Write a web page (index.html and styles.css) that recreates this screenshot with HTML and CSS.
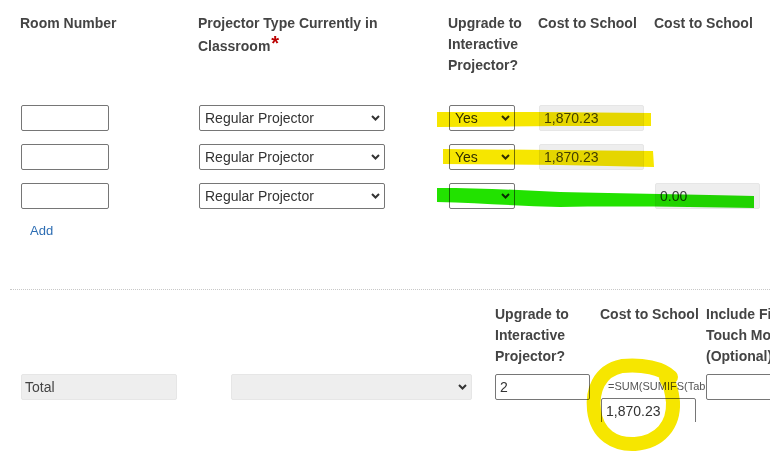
FILE: index.html
```html
<!DOCTYPE html>
<html lang="en">
<head>
    <meta charset="UTF-8">
    <meta name="viewport" content="width=device-width, initial-scale=1.0">
    <title>Interactive Projector Upgrade</title>
    <link rel="stylesheet" href="styles.css">
</head>
<body>

<div class="page">

    <section class="projectors">
        <div class="row head">
            <div class="cell">Room Number</div>
            <div class="cell">Projector Type Currently in Classroom<span class="req">*</span></div>
            <div class="cell">Upgrade to Interactive Projector?</div>
            <div class="cell">Cost to School</div>
            <div class="cell">Cost to School</div>
        </div>

        <div class="rows">
            <div class="row">
                <div class="cell"><input class="field room" type="text"></div>
                <div class="cell">
                    <span class="sel">
                        <select class="field type"><option>Regular Projector</option></select>
                        <svg class="chev" width="9" height="6" viewBox="0 0 9 6"><path d="M1 1L4.5 4.5L8 1"/></svg>
                    </span>
                </div>
                <div class="cell">
                    <span class="sel">
                        <select class="field yes"><option>Yes</option></select>
                        <svg class="chev" width="9" height="6" viewBox="0 0 9 6"><path d="M1 1L4.5 4.5L8 1"/></svg>
                    </span>
                </div>
                <div class="cell"><input class="field calc cost" type="text" value="1,870.23" readonly></div>
                <div class="cell"></div>
            </div>

            <div class="row">
                <div class="cell"><input class="field room" type="text"></div>
                <div class="cell">
                    <span class="sel">
                        <select class="field type"><option>Regular Projector</option></select>
                        <svg class="chev" width="9" height="6" viewBox="0 0 9 6"><path d="M1 1L4.5 4.5L8 1"/></svg>
                    </span>
                </div>
                <div class="cell">
                    <span class="sel">
                        <select class="field yes"><option>Yes</option></select>
                        <svg class="chev" width="9" height="6" viewBox="0 0 9 6"><path d="M1 1L4.5 4.5L8 1"/></svg>
                    </span>
                </div>
                <div class="cell"><input class="field calc cost" type="text" value="1,870.23" readonly></div>
                <div class="cell"></div>
            </div>

            <div class="row">
                <div class="cell"><input class="field room" type="text"></div>
                <div class="cell">
                    <span class="sel">
                        <select class="field type"><option>Regular Projector</option></select>
                        <svg class="chev" width="9" height="6" viewBox="0 0 9 6"><path d="M1 1L4.5 4.5L8 1"/></svg>
                    </span>
                </div>
                <div class="cell">
                    <span class="sel">
                        <select class="field yes"><option></option></select>
                        <svg class="chev" width="9" height="6" viewBox="0 0 9 6"><path d="M1 1L4.5 4.5L8 1"/></svg>
                    </span>
                </div>
                <div class="cell"></div>
                <div class="cell"><input class="field calc cost" type="text" value="0.00" readonly></div>
            </div>
        </div>

        <a class="add" href="#">Add</a>
    </section>

    <section class="totals">
        <div class="row head">
            <div class="cell"></div>
            <div class="cell"></div>
            <div class="cell">Upgrade to Interactive Projector?</div>
            <div class="cell">Cost to School</div>
            <div class="cell">Include Fixed Touch Monitor (Optional)</div>
        </div>

        <div class="row">
            <div class="cell"><input class="field calc total" type="text" value="Total" readonly></div>
            <div class="cell">
                <span class="sel">
                    <select class="field calc blank"><option></option></select>
                    <svg class="chev" width="9" height="6" viewBox="0 0 9 6"><path d="M1 1L4.5 4.5L8 1"/></svg>
                </span>
            </div>
            <div class="cell"><input class="field count" type="text" value="2"></div>
            <div class="cell formula">
                <div class="formula-text">=SUM(SUMIFS(Table1[Cost to School],Table1[Upgrade to Interactive Projector?],"Yes"))</div>
                <input class="field sum" type="text" value="1,870.23">
            </div>
            <div class="cell"><input class="field count" type="text"></div>
        </div>
    </section>

    <!-- highlighter marks drawn over the form -->
    <svg class="marks" width="770" height="453" viewBox="0 0 770 453">
        <path class="yellow" d="M437 112 L540 112 L651 113 L651 126 L560 126 L437 127 Z"/>
        <path class="yellow" d="M443 149 L550 150 L653 151 L654 167 L560 165 L443 164 Z"/>
        <path class="green" d="M437 188 C480 188 520 190 560 192 C620 193 700 195 754 196 L754 208 C700 207 620 206 560 207 C520 206 480 203 437 202 Z"/>
        <path class="ring" d="M671 377 C662 368 642 364 622 366 C598 371 592 392 594 410 C597 435 615 445 635 444 C660 442 674 425 673 402 C672 392 670 384 666 378"/>
    </svg>

</div>

</body>
</html>
```

FILE: styles.css
```css
body {
    margin: 0;
    font-family: "Liberation Sans", Arial, sans-serif;
    color: #333;
    background: #fff;
    overflow: hidden;
}

.page {
    position: relative;
    width: 770px;
    height: 453px;
    overflow: hidden;
}

.row {
    display: grid;
    align-items: start;
}

.head {
    font-size: 14px;
    font-weight: bold;
    line-height: 21px;
    color: #444;
    height: 63px;
}

.projectors .head .cell {
    padding-right: 10px;
}

.req {
    color: #b00;
    font-size: 20px;
    line-height: 1;
    margin-left: 1px;
    position: relative;
    top: -1px;
}

/* top table */
.projectors {
    padding: 13px 0 0 20px;
}

.projectors .row {
    grid-template-columns: 178px 250px 90px 116px 1fr;
}

.projectors .head {
    margin-bottom: 29px;
}

.rows {
    display: flex;
    flex-direction: column;
    gap: 13px;
}

.field {
    box-sizing: border-box;
    height: 26px;
    margin: 0 0 0 1px;
    padding: 0 4px;
    border: 1px solid #767676;
    border-radius: 2px;
    background: #fff;
    font-family: "Liberation Sans", Arial, sans-serif;
    font-size: 14px;
    color: #333;
    display: block;
}

.calc {
    background: #eee;
    border-color: #e6e6e6;
    color: #444;
}

.room {
    width: 88px;
}

.sel {
    position: relative;
    display: inline-block;
}

.sel select {
    appearance: none;
    -webkit-appearance: none;
    padding-left: 5px;
}

.chev {
    position: absolute;
    right: 5px;
    top: 10px;
    fill: none;
    stroke: #333;
    stroke-width: 2;
}

.type {
    width: 186px;
}

.yes {
    width: 66px;
}

.cost {
    width: 105px;
}

.add {
    display: inline-block;
    margin: 12px 0 0 10px;
    font-size: 13px;
    line-height: 20px;
    color: #2d6db3;
    text-decoration: none;
}

/* totals table */
.totals {
    margin: 48px 0 0 10px;
    border-top: 1px dotted #c8c8c8;
    padding: 14px 0 0 11px;
}

.totals .row {
    grid-template-columns: 210px 264px 105px 106px 130px;
}

.totals .head .cell {
    padding-right: 4px;
}

.totals .head {
    margin-bottom: 7px;
}

.totals .field {
    margin-left: 0;
}

.total {
    width: 156px;
    padding-left: 3px;
}

.blank {
    width: 241px;
}

.count {
    width: 95px;
}

.formula {
    height: 48px;
    overflow: hidden;
}

.formula-text {
    font-size: 11px;
    line-height: 24px;
    color: #555;
    padding-left: 8px;
    white-space: nowrap;
}

.totals .sum {
    width: 95px;
    margin-left: 1px;
}

/* highlighter */
.marks {
    position: absolute;
    top: 0;
    left: 0;
    pointer-events: none;
    mix-blend-mode: multiply;
}

.yellow {
    fill: #f6e600;
}

.green {
    fill: #22e200;
}

.ring {
    fill: none;
    stroke: #f6e600;
    stroke-width: 14;
    stroke-linecap: round;
}
```
